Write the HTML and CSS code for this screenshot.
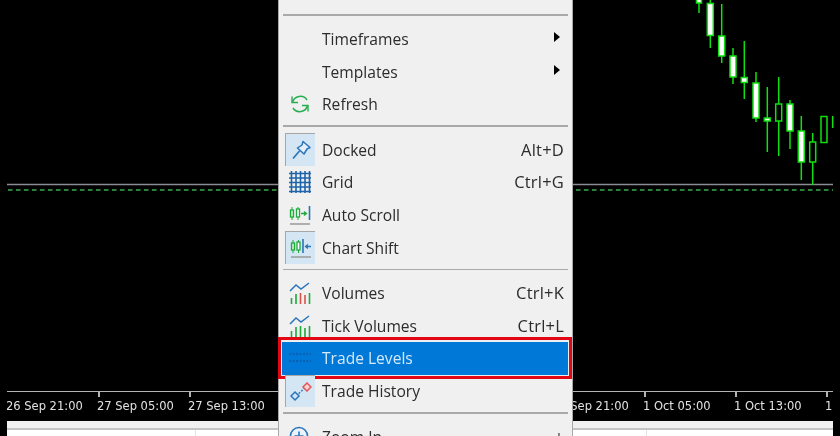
FILE: index.html
```html
<!DOCTYPE html>
<html lang="en">
<head>
<meta charset="utf-8">
<title>Chart context menu</title>
<link rel="stylesheet" href="styles.css">
</head>
<body>
<div class="terminal">
  <svg class="chart" viewBox="0 0 840 391" width="840" height="391">
    <line class="level" x1="7" y1="184.5" x2="833" y2="184.5"/>
    <line class="dash" x1="8" y1="190" x2="833" y2="190"/>
    <g class="wick">
      <path d="M699 0V13M710.3 0V48M721.7 4V63M733 48V84M744.3 41V99M756 72V122M767.3 87V152M778.7 77V156M790 100V149M801.3 116V180M812.7 133V185M832.7 116V128"/>
    </g>
    <g class="full">
      <rect x="696.500" y="-4" width="5" height="7"/>
      <rect x="707.300" y="3.500" width="6" height="32"/>
      <rect x="718.700" y="36" width="6" height="20"/>
      <rect x="730" y="56" width="6" height="21"/>
      <rect x="741.300" y="77.500" width="6" height="5"/>
      <rect x="753" y="83" width="6" height="35"/>
      <rect x="764.300" y="118" width="6" height="3"/>
      <rect x="787" y="104" width="6" height="27"/>
      <rect x="798.300" y="131" width="6" height="31"/>
    </g>
    <g class="hollow">
      <rect x="775.700" y="104" width="6" height="17"/>
      <rect x="809.700" y="142" width="6" height="20"/>
      <rect x="821" y="116.500" width="6" height="26"/>
    </g>
  </svg>
  <div class="axis">
    <span class="time">26 Sep 21:00</span>
    <span class="time">27 Sep 05:00</span>
    <span class="time">27 Sep 13:00</span>
    <span class="time">27 Sep 21:00</span>
    <span class="time">30 Sep 05:00</span>
    <span class="time">30 Sep 13:00</span>
    <span class="time">30 Sep 21:00</span>
    <span class="time">1 Oct 05:00</span>
    <span class="time">1 Oct 13:00</span>
    <span class="time">1 Oct 21:00</span>
  </div>
  <div class="panel">
    <div class="panel-bar"></div>
    <div class="panel-body">
      <div class="cell cell-a"></div>
      <div class="cell cell-b"></div>
      <div class="cell"></div>
    </div>
  </div>
</div>

<div class="menu">
  <div class="item"><span class="icon"></span><span class="label">Line Chart</span><span class="key">Alt+3</span></div>
  <div class="sep sep-top"></div>
  <div class="item"><span class="icon"></span><span class="label">Timeframes</span><span class="arrow"></span></div>
  <div class="item"><span class="icon"></span><span class="label">Templates</span><span class="arrow"></span></div>
  <div class="item"><span class="icon"><svg viewBox="0 0 22 22" width="22" height="22"><g fill="none" stroke="#27ae4f" stroke-width="1.600"><path d="M3.500 9.500A8 8 0 0 1 18 7"/><path d="M18.500 12.500A8 8 0 0 1 4 15"/><path d="M3 3.500V9.500H9" stroke-width="1.400"/><path d="M19 18.500V12.500H13" stroke-width="1.400"/></g></svg></span><span class="label">Refresh</span></div>
  <div class="sep"></div>
  <div class="item"><span class="icon on"><svg viewBox="0 0 22 22" width="22" height="22"><g fill="#e3effa" stroke="#2a74b8" stroke-width="1.500" stroke-linejoin="round"><path d="M13 2.500L20 8.500L17 10L14 15L7.500 9L12 6Z"/><path d="M9.500 12L3 19.500" fill="none" stroke-width="1.700"/></g></svg></span><span class="label">Docked</span><span class="key">Alt+D</span></div>
  <div class="item"><span class="icon"><svg viewBox="0 0 22 22" width="22" height="22"><path d="M0 2.500H22M0 7H22M0 11.500H22M0 16H22M0 20.500H22M2.500 0V22M7 0V22M11.500 0V22M16 0V22M20.500 0V22" fill="none" stroke="#1f64a8" stroke-width="1.600"/></svg></span><span class="label">Grid</span><span class="key">Ctrl+G</span></div>
  <div class="item"><span class="icon"><svg viewBox="0 0 22 22" width="22" height="22"><path d="M3 3V16M9 3V16" stroke="#1faa3c" stroke-width="1"/><rect x="1.500" y="6" width="3" height="7" fill="#c9f0c9" stroke="#1faa3c" stroke-width="1.300"/><rect x="7.500" y="5" width="3" height="8" fill="#fff" stroke="#1faa3c" stroke-width="1.300"/><path d="M12 9.500H17M15 7.500L17.500 9.500L15 11.500" fill="none" stroke="#1faa3c" stroke-width="1.300"/><path d="M20.500 2V16" stroke="#2a74b8" stroke-width="1.600"/><path d="M1 20H21" stroke="#9a9a9a" stroke-width="1.500"/></svg></span><span class="label">Auto Scroll</span></div>
  <div class="item"><span class="icon on"><svg viewBox="0 0 22 22" width="22" height="22"><path d="M3 3V16M8.500 3V16" stroke="#1faa3c" stroke-width="1"/><rect x="1.500" y="6" width="3" height="7" fill="#c9f0c9" stroke="#1faa3c" stroke-width="1.300"/><rect x="7" y="5" width="3" height="8" fill="#fff" stroke="#1faa3c" stroke-width="1.300"/><path d="M13 2V16" stroke="#2a74b8" stroke-width="1.600"/><path d="M15.500 9.500H21M18 7.500L15.500 9.500L18 11.500" fill="none" stroke="#2a74b8" stroke-width="1.300"/><path d="M1 20H21" stroke="#9a9a9a" stroke-width="1.500"/></svg></span><span class="label">Chart Shift</span></div>
  <div class="sep"></div>
  <div class="item"><span class="icon"><svg viewBox="0 0 22 22" width="22" height="22"><path d="M1 9L7 3L12 7L20 1" fill="none" stroke="#2a74b8" stroke-width="1.500"/><path d="M2.500 22V16M7 22V12" stroke="#1faa3c" stroke-width="1.600"/><path d="M11.500 22V11M16 22V13" stroke="#d9534f" stroke-width="1.600"/><path d="M20.500 22V11" stroke="#1faa3c" stroke-width="1.600"/></svg></span><span class="label">Volumes</span><span class="key">Ctrl+K</span></div>
  <div class="item"><span class="icon"><svg viewBox="0 0 22 22" width="22" height="22"><path d="M1 9L7 3L12 7L20 1" fill="none" stroke="#2a74b8" stroke-width="1.500"/><path d="M2.500 22V16M7 22V12M11.500 22V11M16 22V13M20.500 22V11" stroke="#1faa3c" stroke-width="1.600"/></svg></span><span class="label">Tick Volumes</span><span class="key">Ctrl+L</span></div>
  <div class="item selected"><span class="icon"><svg viewBox="0 0 22 22" width="22" height="22"><path d="M0 7H22M0 14H22" fill="none" stroke="#0b5aa6" stroke-width="1.400" stroke-dasharray="2 1.500"/></svg></span><span class="label">Trade Levels</span></div>
  <div class="item"><span class="icon on"><svg viewBox="0 0 22 22" width="22" height="22"><path d="M6 16L16 7" fill="none" stroke="#2a74b8" stroke-width="1.400" stroke-dasharray="2 1.500"/><path d="M5 12L9 16L5 20L1 16Z" fill="#cfe4f7" stroke="#2a74b8" stroke-width="1.500"/><path d="M17 3L21 7L17 11L13 7Z" fill="#fbd3d3" stroke="#e0555a" stroke-width="1.500"/></svg></span><span class="label">Trade History</span></div>
  <div class="sep"></div>
  <div class="item"><span class="icon"><svg viewBox="0 0 22 22" width="22" height="22"><circle cx="10" cy="10" r="8.500" fill="#eaf3fb" stroke="#2a74b8" stroke-width="1.600"/><path d="M5.500 10H14.500M10 5.500V14.500" stroke="#2a74b8" stroke-width="1.600"/></svg></span><span class="label">Zoom In</span><span class="key">+</span></div>
</div>
</body>
</html>
```
FILE: styles.css
```css
* { box-sizing: border-box; }
html, body { margin: 0; padding: 0; }
body {
  position: relative;
  width: 840px;
  height: 436px;
  overflow: hidden;
  background: #000;
}
.terminal {
  display: flex;
  flex-direction: column;
  height: 436px;
  filter: blur(0.35px);
}
.chart { display: block; flex: none; }
.level { stroke: #8b8b92; stroke-width: 1.5; }
.dash { stroke: #35b04a; stroke-width: 1.5; stroke-dasharray: 4.500 3.500; }
.wick path { stroke: #0fe00f; stroke-width: 1.500; fill: none; }
.full rect { fill: #fff; stroke: #0fe00f; stroke-width: 1.500; }
.hollow rect { fill: #000; stroke: #0fe00f; stroke-width: 1.500; }

.axis {
  flex: none;
  display: flex;
  height: 30px;
  margin: 0 7px;
  overflow: hidden;
  border-top: 1.500px solid #b4b4b4;
}
.time {
  position: relative;
  flex: none;
  width: 91px;
  padding-top: 6px;
  text-indent: -1px;
  font: 11.500px/16px "DejaVu Sans", sans-serif;
  color: #e2e2e2;
  white-space: nowrap;
}
.time + .time::before {
  content: "";
  position: absolute;
  left: 0;
  top: 0;
  width: 1.500px;
  height: 5px;
  background: #b4b4b4;
}
.panel {
  flex: 1;
  margin: 0 7px;
  display: flex;
  flex-direction: column;
}
.panel-bar {
  flex: none;
  height: 9px;
  background: #f0f0f0;
  border-bottom: 2px solid #c4c4c4;
}
.panel-body {
  flex: 1;
  display: flex;
  background: #fff;
}
.cell { flex: 1; }
.cell-a { flex: none; width: 189px; border-right: 1px solid #e4e4e4; }
.cell-b { flex: none; width: 451px; border-right: 1px solid #e4e4e4; }

.menu {
  position: absolute;
  left: 278px;
  top: -23px;
  width: 295px;
  padding: 0 4px 0 3px;
  background: #f0f0f0;
  border-left: 1px solid #a8a8a8;
  border-right: 1px solid #a8a8a8;
  font: 15.600px/20px "Open Sans", sans-serif;
  color: #2c2c2c;
  filter: blur(0.3px);
}
.item {
  position: relative;
  display: flex;
  align-items: center;
  height: 32.600px;
  padding-right: 4px;
}
.icon {
  flex: none;
  display: flex;
  align-items: center;
  justify-content: center;
  width: 30px;
  height: 100%;
  margin-left: 3px;
  margin-right: 7px;
}
.on {
  background: #d4e5f4;
  border-top: 1.500px solid #a6a6a6;
  border-left: 1.500px solid #a6a6a6;
}
.label { flex: 1; white-space: nowrap; }
.key { flex: none; font-size: 16.500px; letter-spacing: 0.2px; }
.arrow {
  flex: none;
  width: 0;
  height: 0;
  margin-right: 4px;
  margin-bottom: 3.500px;
  border-left: 6px solid #000;
  border-top: 5.500px solid transparent;
  border-bottom: 5.500px solid transparent;
}
.sep {
  height: 13px;
  padding-top: 5px;
}
.sep-top {
  height: 13.100px;
  padding-top: 4.900px;
}
.sep::before {
  content: "";
  display: block;
  height: 1.500px;
  margin-left: 1px;
  background: #a9a9a9;
}
.selected {
  background: #0078d7;
  color: #d4e9fb;
}
.selected::after {
  content: "";
  position: absolute;
  left: -4.500px;
  right: -3.500px;
  top: -5px;
  bottom: -4px;
  border: 3.500px solid #e30613;
  box-shadow: inset 0 0 0 1px rgba(232, 238, 244, 0.8);
}
```
